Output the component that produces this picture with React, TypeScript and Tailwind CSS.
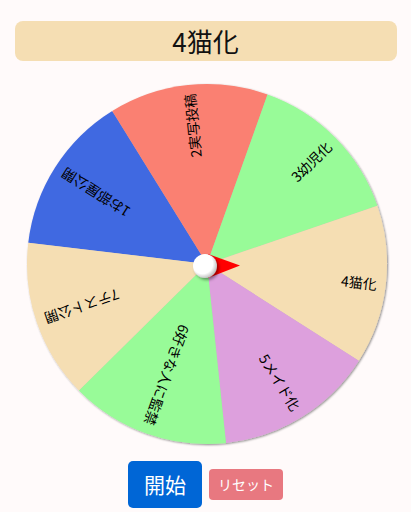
import React from 'react';

const SIZE = 380;
const C = SIZE / 2;
const R = 180;
const START = -173.2; // angle where the first slice begins (degrees, clockwise from +x)

const items = [
  { label: '1お部屋公開', color: '#4169e1' },
  { label: '2実写投稿', color: '#fa8072' },
  { label: '3幼児化', color: '#98fb98' },
  { label: '4猫化', color: '#f5deb3' },
  { label: '5メイド化', color: '#dda0dd' },
  { label: '6好きな人に監禁', color: '#98fb98' },
  { label: '7テスト公開', color: '#f5deb3' },
];

const rad = (d: number) => (d * Math.PI) / 180;

function slicePath(a0: number, a1: number) {
  const x0 = C + R * Math.cos(rad(a0));
  const y0 = C + R * Math.sin(rad(a0));
  const x1 = C + R * Math.cos(rad(a1));
  const y1 = C + R * Math.sin(rad(a1));
  return `M${C},${C} L${x0},${y0} A${R},${R} 0 0 1 ${x1},${y1} Z`;
}

function Wheel() {
  const step = 360 / items.length;
  return (
    <svg width={SIZE} height={SIZE} viewBox={`0 0 ${SIZE} ${SIZE}`} className="block ml-[3px] mt-[13px]">
      <defs>
        <filter id="wheelShadow" x="-10%" y="-10%" width="120%" height="120%">
          <feDropShadow dx="1" dy="1" stdDeviation="1.2" floodColor="#000" floodOpacity="0.45" />
        </filter>
        <filter id="hubShadow" x="-50%" y="-50%" width="200%" height="200%">
          <feDropShadow dx="2" dy="2" stdDeviation="1.5" floodColor="#000" floodOpacity="0.4" />
        </filter>
        <radialGradient id="hubFill" cx="40%" cy="40%" r="65%">
          <stop offset="0%" stopColor="#ffffff" />
          <stop offset="65%" stopColor="#ffffff" />
          <stop offset="100%" stopColor="#b5b5b5" />
        </radialGradient>
      </defs>

      <g filter="url(#wheelShadow)">
        {items.map((it, i) => (
          <path key={i} d={slicePath(START + i * step, START + (i + 1) * step)} fill={it.color} />
        ))}
      </g>

      {items.map((it, i) => {
        const mid = START + (i + 0.5) * step;
        return (
          <g key={`t${i}`} transform={`rotate(${mid} ${C} ${C})`}>
            <text
              x={C + 171}
              y={C}
              textAnchor="end"
              dominantBaseline="central"
              fontSize={14}
              fill="#000"
              style={{ fontFamily: '"Noto Sans CJK JP", "Noto Sans", sans-serif' }}
            >
              {it.label}
            </text>
          </g>
        );
      })}

      {/* pointer, then hub on top */}
      <polygon points={`${C + 1},${C - 10} ${C + 33},${C + 1.5} ${C + 1},${C + 14}`} fill="#ff0000" />
      <circle cx={C - 2} cy={C + 2} r={12} fill="url(#hubFill)" filter="url(#hubShadow)" />
    </svg>
  );
}

export default function App() {
  return (
    <div
      className="min-h-screen bg-[#fffafa] flex flex-col items-center pt-[21px]"
      style={{ fontFamily: '"Noto Sans CJK JP", "Noto Sans", sans-serif' }}
    >
      <div className="w-[382px] h-10 bg-[#f5deb3] rounded-lg flex items-center justify-center text-[26px] text-[#111] leading-none">
        4猫化
      </div>

      <Wheel />

      <div className="flex items-center gap-[7px] mt-[7px]">
        <button className="w-[74px] h-[47px] rounded-[5px] bg-[#0066d6] text-white text-[21px] flex items-center justify-center">
          開始
        </button>
        <button className="w-[74px] h-[31px] rounded-[4px] bg-[#e87880] text-white text-[14px] flex items-center justify-center">
          リセット
        </button>
      </div>
    </div>
  );
}
